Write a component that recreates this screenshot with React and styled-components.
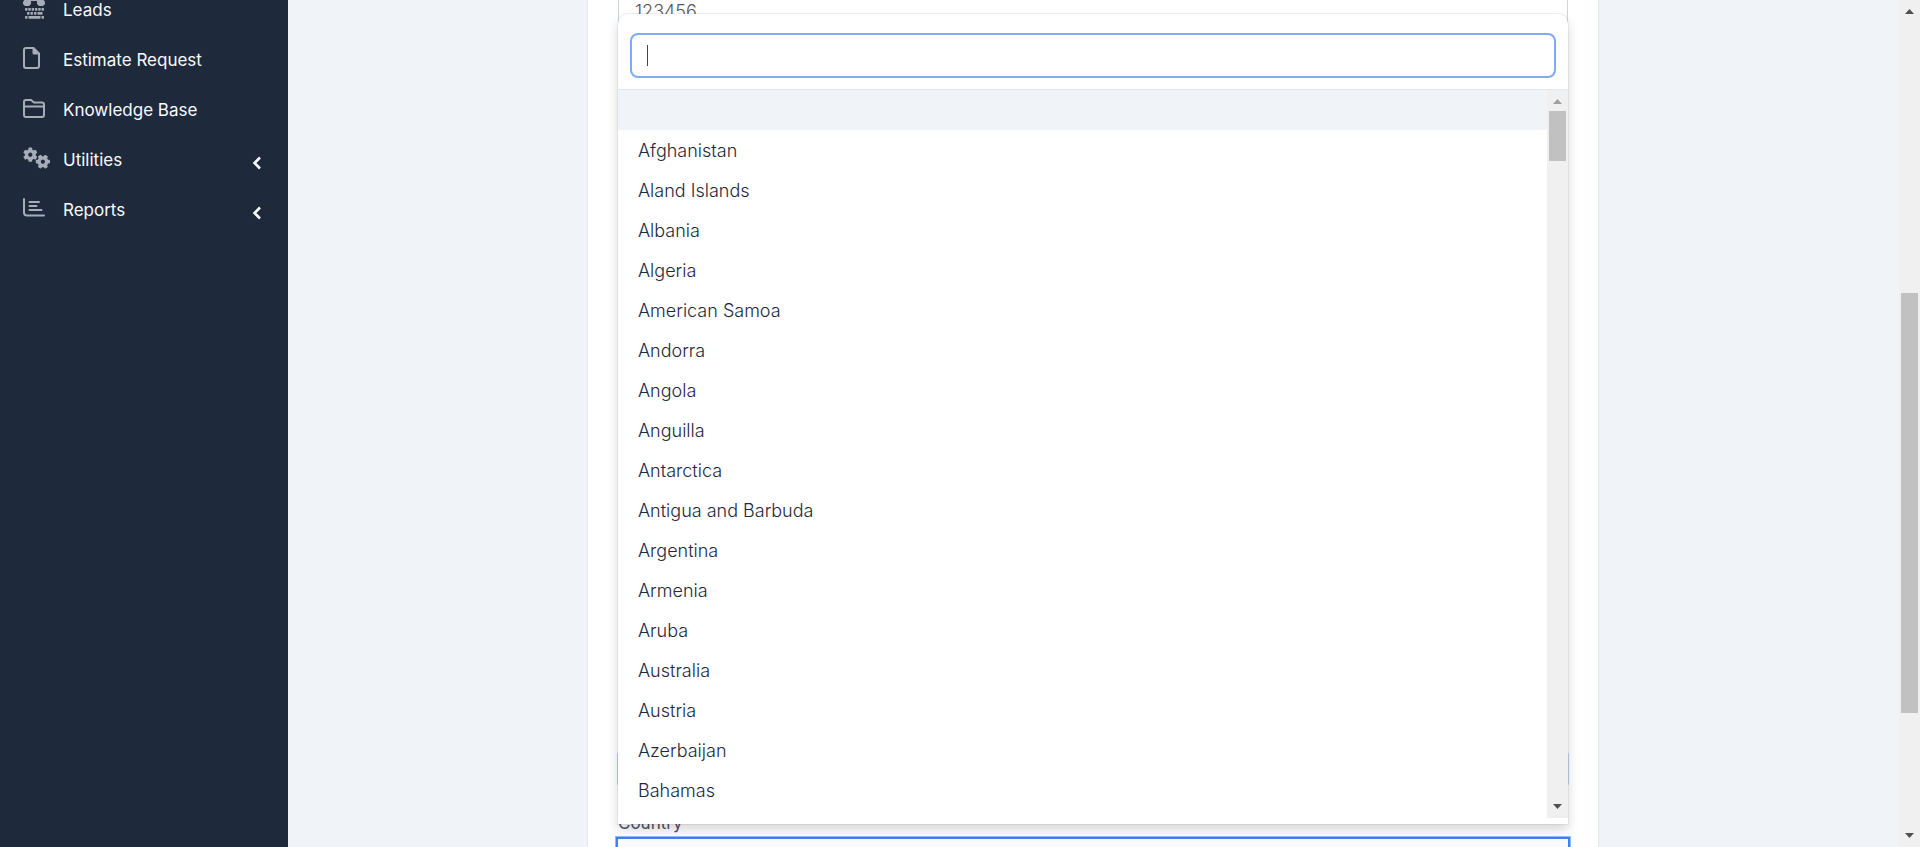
import React from "react";
import styled, { createGlobalStyle } from "styled-components";

const GlobalStyle = createGlobalStyle`
  * { box-sizing: border-box; }
  body {
    margin: 0;
    background: #f0f4f9;
    color: #475569;
    font-family: Inter, "Liberation Sans", sans-serif;
    font-size: 18px;
    line-height: 24px;
  }
  ul { list-style: none; margin: 0; padding: 0; }
`;

const Page = styled.div`
  display: flex;
  height: 100vh;
  overflow: hidden;
`;

const Sidebar = styled.nav`
  flex: 0 0 288px;
  background: #1e293b;
`;

/* The menu is scrolled part of the way past its first entry. */
const Menu = styled.ul`
  margin-top: -15px;
`;

const MenuLink = styled.a`
  display: flex;
  align-items: center;
  height: 50px;
  padding: 0 26px 0 23px;
  color: #f8fafc;
  font-size: 17px;
  text-decoration: none;
`;

const MenuIcon = styled.span`
  display: flex;
  flex: 0 0 40px;
  padding-bottom: 4px;
  color: #a6adb8;
`;

const Chevron = styled.svg`
  width: 10px;
  height: 14px;
  margin: 5px 0 0 auto;
  color: #fff;
`;

const Main = styled.main`
  flex: 1;
  min-width: 0;
  padding: 0 301px 0 300px;
`;

const Card = styled.form`
  display: flex;
  flex-direction: column;
  min-height: 100%;
  padding: 0 30px;
  background: #fff;
  box-shadow: 0 0 0 1px #e2e8f0;
`;

const Field = styled.div`
  position: relative;
  display: flex;
  flex-direction: column;
`;

const ScrolledField = styled(Field)`
  margin-top: -11px;
`;

const Spacer = styled.div`
  height: 719px;
`;

const MutedRing = styled.div`
  height: 32px;
  margin-bottom: 26px;
  border-radius: 2px;
  box-shadow: 0 0 0 1px #bfd3f5;
`;

const TextInput = styled.input`
  height: 45px;
  padding: 0 16px;
  border: 1px solid #cbd5e1;
  border-radius: 6px;
  color: #555;
  font: inherit;
  font-weight: 300;
  outline: none;
`;

const Label = styled.label`
  margin-bottom: 2px;
  color: #475569;
  font-size: 17px;
`;

const CountrySelect = styled.select`
  height: 45px;
  margin: 0 -2px;
  border: 2px solid #3b82f6;
  outline: 1px solid #93bbfb;
  background: #f8fafc;
  font: inherit;
  appearance: none;
`;

const Dropdown = styled.div`
  position: absolute;
  right: 0;
  bottom: 58px;
  left: 0;
  padding-bottom: 6px;
  border-radius: 10px 10px 0 0;
  background: #fff;
  box-shadow: 0 0 0 1px rgba(0, 0, 0, 0.05), 0 6px 12px rgba(0, 0, 0, 0.16);
`;

const SearchBar = styled.div`
  display: flex;
  padding: 19px 12px 11px;
  border-bottom: 1px solid #dfe6f0;
`;

const SearchInput = styled.input`
  flex: 1;
  min-width: 0;
  height: 45px;
  padding: 0 14px;
  border: 2px solid #7eabf4;
  border-radius: 8px;
  color: #555;
  font: inherit;
  outline: none;
`;

const Caret = styled.span`
  position: absolute;
  top: 31px;
  left: 29px;
  width: 1px;
  height: 21px;
  background: #444;
`;

const ListArea = styled.div`
  display: flex;
  height: 728px;
`;

const Options = styled.ul`
  flex: 1;
  overflow: hidden;
`;

const Option = styled.li`
  height: 40px;
  padding: 9px 20px 7px;
  background: ${(p) => (p.$active ? "#f0f4f9" : "#fff")};
  color: #1e293b;
  font-weight: 300;
`;

const Track = styled.div`
  display: flex;
  flex: 0 0 21px;
  flex-direction: column;
  align-items: center;
  background: #f0f0f0;
`;

const ArrowBox = styled.span`
  display: flex;
  align-items: ${(p) => (p.$down ? "flex-start" : "flex-end")};
  height: 21px;
  padding: 7px 0;
  color: ${(p) => (p.$dim ? "#a0a0a0" : "#505050")};
`;

const Rail = styled.div`
  display: flex;
  flex: 1;
  flex-direction: column;
  width: 17px;
`;

const Gap = styled.div`
  flex: ${(p) => p.$share} 0 0;
`;

const Thumb = styled.div`
  flex: ${(p) => p.$share} 0 0;
  background: #c1c1c1;
`;

function Arrow({ down, dim }) {
  return (
    <ArrowBox $dim={dim} $down={down}>
      <svg width="9" height="5" viewBox="0 0 9 5" aria-hidden="true">
        <path fill="currentColor" d={down ? "M0 0H9L4.500 5Z" : "M0 5H9L4.500 0Z"} />
      </svg>
    </ArrowBox>
  );
}

function Scrollbar({ before, thumb, after }) {
  return (
    <Track aria-hidden="true">
      <Arrow dim={before === 0} />
      <Rail>
        <Gap $share={before} />
        <Thumb $share={thumb} />
        <Gap $share={after} />
      </Rail>
      <Arrow down />
    </Track>
  );
}

function PhoneIcon() {
  return (
    <svg width="22" height="22" viewBox="0 0 22 22" fill="currentColor" aria-hidden="true">
      <path d="M0 6C0 2 6 0 11 0S22 2 22 6V7L20 9H16L14 7V4H8V7L6 9H2L0 7Z" />
      {[2, 5.300, 8.600, 11.900, 15.200, 18.500].map((x) => (
        <rect key={x} x={x} y="11" width="2.500" height="2.700" rx="0.600" />
      ))}
      {[4, 7.500, 11, 14.500, 17].map((x) => (
        <rect key={x} x={x} y="15" width="2.500" height="2.700" rx="0.600" />
      ))}
      <rect x="2" y="19" width="2.500" height="2.700" rx="0.600" />
      <rect x="5.500" y="19" width="12" height="2.700" rx="0.600" />
      <rect x="18.500" y="19" width="2.500" height="2.700" rx="0.600" />
    </svg>
  );
}

function FileIcon() {
  return (
    <svg width="17" height="22" viewBox="0 0 17 22" fill="none" aria-hidden="true">
      <path
        d="M3 1H10.500L16 6.500V19a2 2 0 0 1-2 2H3a2 2 0 0 1-2-2V3a2 2 0 0 1 2-2Z"
        stroke="currentColor"
        strokeWidth="2"
      />
      <path d="M9.500 1H11L16 6V7.500H11a1.500 1.500 0 0 1-1.500-1.500Z" fill="currentColor" />
    </svg>
  );
}

function FolderIcon() {
  return (
    <svg
      width="22"
      height="22"
      viewBox="0 0 22 22"
      fill="none"
      stroke="currentColor"
      strokeWidth="2"
      aria-hidden="true"
    >
      <path d="M3 3H8L11 5.500H19a2 2 0 0 1 2 2V18a2 2 0 0 1-2 2H3a2 2 0 0 1-2-2V5a2 2 0 0 1 2-2Z" />
      <path d="M1 9.500H21" />
    </svg>
  );
}

function Gear({ x, y, turn }) {
  return (
    <g transform={`translate(${x} ${y}) rotate(${turn})`}>
      <circle r="3.800" fill="none" stroke="currentColor" strokeWidth="3.400" />
      {[0, 60, 120, 180, 240, 300].map((a) => (
        <rect
          key={a}
          x="-1.900"
          y="-7.100"
          width="3.800"
          height="3"
          rx="0.800"
          fill="currentColor"
          transform={`rotate(${a})`}
        />
      ))}
    </g>
  );
}

function GearsIcon() {
  return (
    <svg width="28" height="22" viewBox="0 0 28 22" aria-hidden="true">
      <Gear x={7.300} y={7.700} turn={0} />
      <Gear x={19.900} y={14.700} turn={30} />
    </svg>
  );
}

function ChartIcon() {
  return (
    <svg
      width="22"
      height="22"
      viewBox="0 0 22 22"
      fill="none"
      stroke="currentColor"
      strokeWidth="2"
      strokeLinecap="round"
      aria-hidden="true"
    >
      <path d="M1 2V15.500a3 3 0 0 0 3 3H21" />
      <path d="M6.500 5H16M6.500 9H13.500M6.500 13H18.500" />
    </svg>
  );
}

const menu = [
  { name: "Leads", Icon: PhoneIcon },
  { name: "Estimate Request", Icon: FileIcon },
  { name: "Knowledge Base", Icon: FolderIcon },
  { name: "Utilities", Icon: GearsIcon, nested: true },
  { name: "Reports", Icon: ChartIcon, nested: true },
];

const countries = [
  "",
  "Afghanistan",
  "Aland Islands",
  "Albania",
  "Algeria",
  "American Samoa",
  "Andorra",
  "Angola",
  "Anguilla",
  "Antarctica",
  "Antigua and Barbuda",
  "Argentina",
  "Armenia",
  "Aruba",
  "Australia",
  "Austria",
  "Azerbaijan",
  "Bahamas",
];

export default function App() {
  return (
    <Page>
      <GlobalStyle />
      <Sidebar>
        <Menu>
          {menu.map(({ name, Icon, nested }) => (
            <li key={name}>
              <MenuLink href="#">
                <MenuIcon>
                  <Icon />
                </MenuIcon>
                {name}
                {nested && (
                  <Chevron viewBox="0 0 10 14" fill="none" aria-hidden="true">
                    <path d="M8 1.500L2.500 7L8 12.500" stroke="currentColor" strokeWidth="2.600" />
                  </Chevron>
                )}
              </MenuLink>
            </li>
          ))}
        </Menu>
      </Sidebar>
      <Main>
        <Card>
          <ScrolledField>
            <TextInput aria-label="Number" defaultValue="123456" />
          </ScrolledField>
          <Spacer />
          <MutedRing />
          <Field>
            <Label htmlFor="country">Country</Label>
            <CountrySelect id="country" />
            <Dropdown>
              <SearchBar>
                <SearchInput type="text" aria-label="Search countries" />
                <Caret />
              </SearchBar>
              <ListArea>
                <Options role="listbox" aria-label="Countries">
                  {countries.map((c) => (
                    <Option key={c} role="option" $active={c === ""} aria-selected={c === ""}>
                      {c}
                    </Option>
                  ))}
                </Options>
                <Scrollbar before={0} thumb={50} after={636} />
              </ListArea>
            </Dropdown>
          </Field>
        </Card>
      </Main>
      <Scrollbar before={272} thumb={420} after={113} />
    </Page>
  );
}
